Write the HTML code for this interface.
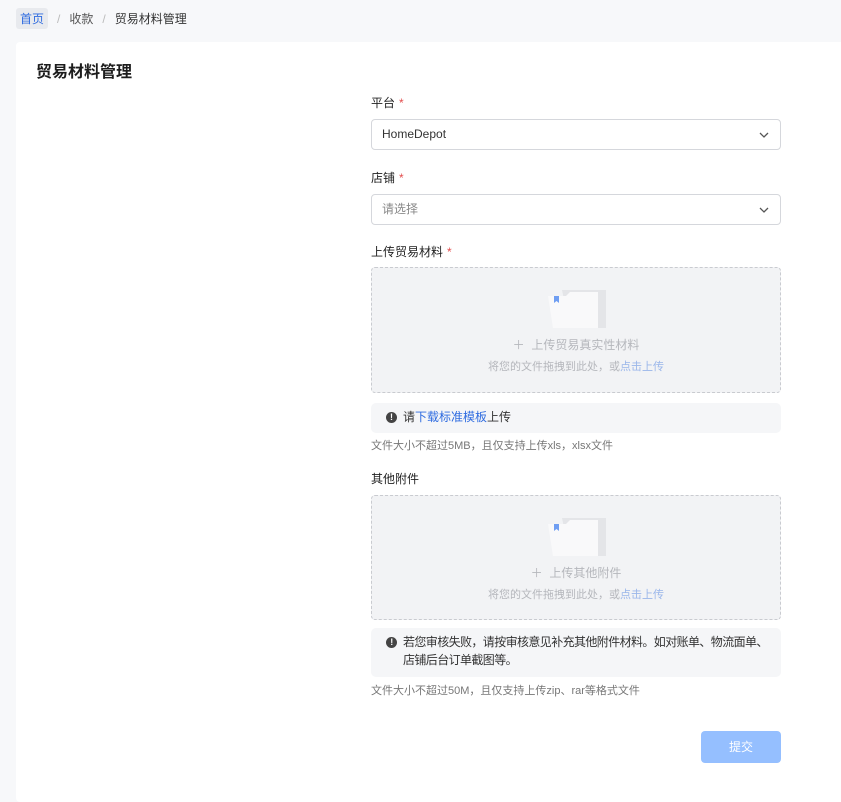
<!DOCTYPE html>
<html><head><meta charset="utf-8"><style>
*{margin:0;padding:0;box-sizing:border-box}
body{width:841px;height:777px;overflow:hidden;background:#f7f8fa;font-family:"Liberation Sans","Noto Sans CJK SC",sans-serif;font-size:12px;color:#333;position:relative}
.abs{position:absolute}
.bc{top:8px;left:16px;font-size:12px;color:#555;display:flex;align-items:center}
.bc .h{background:#e8eaee;color:#2f6ce0;padding:2px 4px;border-radius:3px}
.bc .s{color:#bbb;margin:0 9px}
.card{left:16px;top:42px;width:830px;height:760px;background:#fff;border-radius:4px}
.title{left:36px;top:58px;font-size:16px;font-weight:bold;color:#1d1d1d}
.lbl{left:371px;font-size:12px;color:#222}
.lbl i{color:#e34d4d;font-style:normal;margin-left:4px}
.sel{left:371px;width:410px;height:31px;border:1px solid #d5d7dc;border-radius:4px;padding-left:10px;line-height:29px;font-size:12px;color:#333}
.sel svg{position:absolute;right:10px;top:9px}
.dz{left:371px;width:410px;border:1px dashed #c9cbd0;border-radius:4px;background:#f2f3f5;text-align:center;font-size:11px;color:#b5b7bc}
.dz a{color:#9ab6ea;text-decoration:none}
.al{left:371px;width:410px;background:#f5f6f8;border-radius:5px;font-size:12px;color:#333;padding:5px 0 5px 32px;line-height:18px;white-space:nowrap}
.al .ic{position:absolute;left:15px;top:9px;width:11px;height:11px;border-radius:50%;background:#444;color:#fff;font-size:9px;line-height:11px;text-align:center;font-weight:bold}
.hint{left:371px;font-size:11px;color:#777}
.btn{left:701px;top:731px;width:80px;height:32px;border-radius:4px;background:#95bfff;color:#fff;text-align:center;line-height:32px;font-size:12px}
.fold{position:absolute;left:176px;top:20px;width:58px;height:40px}
</style></head><body>
<div class="abs bc"><span class="h">首页</span><span class="s">/</span><span>收款</span><span class="s">/</span><span style="color:#333">贸易材料管理</span></div>
<div class="abs card"></div>
<div class="abs title">贸易材料管理</div>

<div class="abs lbl" style="top:94px">平台<i>*</i></div>
<div class="abs sel" style="top:119px">HomeDepot<svg width="12" height="12" viewBox="0 0 12 12"><path d="M2 4l4 4 4-4" stroke="#555" stroke-width="1.3" fill="none"/></svg></div>
<div class="abs lbl" style="top:169px">店铺<i>*</i></div>
<div class="abs sel" style="top:194px;color:#888">请选择<svg width="12" height="12" viewBox="0 0 12 12"><path d="M2 4l4 4 4-4" stroke="#555" stroke-width="1.3" fill="none"/></svg></div>

<div class="abs lbl" style="top:243px">上传贸易材料<i>*</i></div>
<div class="abs dz" style="top:267px;height:126px">
<svg class="fold" viewBox="0 0 58 40"><path d="M14 2h44v38H22z" fill="#e4e5e8"/><path d="M0 8h18l4 -4h28v36H5z" fill="#f9f9fa"/><path d="M6 8h5v7l-2.5-2-2.5 2z" fill="#6f9ef2"/></svg>
<div style="margin-top:68px;font-size:12px">＋&nbsp; 上传贸易真实性材料</div>
<div style="margin-top:5px">将您的文件拖拽到此处，或<a>点击上传</a></div>
</div>
<div class="abs al" style="top:403px;height:30px"><span class="ic">!</span>请<span style="color:#2f6ce0">下载标准模板</span>上传</div>
<div class="abs hint" style="top:437px">文件大小不超过5MB，且仅支持上传xls，xlsx文件</div>

<div class="abs lbl" style="top:470px">其他附件</div>
<div class="abs dz" style="top:495px;height:125px">
<svg class="fold" viewBox="0 0 58 40"><path d="M14 2h44v38H22z" fill="#e4e5e8"/><path d="M0 8h18l4 -4h28v36H5z" fill="#f9f9fa"/><path d="M6 8h5v7l-2.5-2-2.5 2z" fill="#6f9ef2"/></svg>
<div style="margin-top:68px;font-size:12px">＋&nbsp; 上传其他附件</div>
<div style="margin-top:5px">将您的文件拖拽到此处，或<a>点击上传</a></div>
</div>
<div class="abs al" style="top:628px;height:49px;padding-top:5px;letter-spacing:-0.6px"><span class="ic">!</span>若您审核失败，请按审核意见补充其他附件材料。如对账单、物流面单、<br>店铺后台订单截图等。</div>
<div class="abs hint" style="top:682px">文件大小不超过50M，且仅支持上传zip、rar等格式文件</div>
<div class="abs btn">提交</div>
</body></html>
